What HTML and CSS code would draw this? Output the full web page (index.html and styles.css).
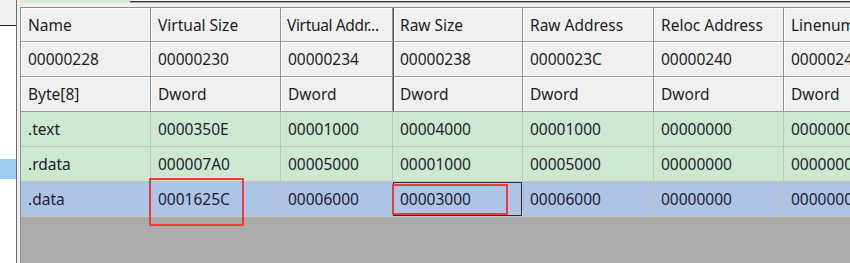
FILE: index.html
```html
<!DOCTYPE html>
<html>
<head>
<meta charset="utf-8">
<title>Section Headers</title>
<link rel="stylesheet" href="styles.css">
</head>
<body>
<div class="side">
  <div class="side-top"></div>
  <div class="side-body"><div class="side-sel"></div></div>
</div>
<div class="divider"></div>
<div class="frame">
  <div class="tabstrip"><div class="tab-on"></div><div class="tab-rest"></div></div>
  <div class="view">
    <div class="grid">
      <div class="cell hd">Name</div>
      <div class="cell hd">Virtual Size</div>
      <div class="cell hd tight">Virtual Addr...</div>
      <div class="cell hd sel-col">Raw Size</div>
      <div class="cell hd">Raw Address</div>
      <div class="cell hd">Reloc Address</div>
      <div class="cell hd">Linenumbers</div>

      <div class="cell hd">00000228</div>
      <div class="cell hd">00000230</div>
      <div class="cell hd">00000234</div>
      <div class="cell hd sel-col">00000238</div>
      <div class="cell hd">0000023C</div>
      <div class="cell hd">00000240</div>
      <div class="cell hd">00000244</div>

      <div class="cell hd">Byte[8]</div>
      <div class="cell hd">Dword</div>
      <div class="cell hd">Dword</div>
      <div class="cell hd sel-col">Dword</div>
      <div class="cell hd">Dword</div>
      <div class="cell hd">Dword</div>
      <div class="cell hd">Dword</div>

      <div class="cell row">.text</div>
      <div class="cell row">0000350E</div>
      <div class="cell row">00001000</div>
      <div class="cell row">00004000</div>
      <div class="cell row">00001000</div>
      <div class="cell row">00000000</div>
      <div class="cell row">00000000</div>

      <div class="cell row">.rdata</div>
      <div class="cell row">000007A0</div>
      <div class="cell row">00005000</div>
      <div class="cell row">00001000</div>
      <div class="cell row">00005000</div>
      <div class="cell row">00000000</div>
      <div class="cell row">00000000</div>

      <div class="cell row active">.data</div>
      <div class="cell row active">0001625C<span class="mark mark-vs"></span></div>
      <div class="cell row active">00006000</div>
      <div class="cell row active focus">00003000<span class="mark mark-rs"></span></div>
      <div class="cell row active">00006000</div>
      <div class="cell row active">00000000</div>
      <div class="cell row active">00000000</div>
    </div>
  </div>
</div>
</body>
</html>
```
FILE: styles.css
```css
html, body {
  margin: 0;
  padding: 0;
}
body {
  width: 850px;
  height: 263px;
  overflow: hidden;
  display: flex;
  background: #f0f0f0;
  font-family: "Noto Sans", "Open Sans", sans-serif;
  font-size: 15.5px;
  color: #1c1c1c;
}
.side {
  width: 16px;
  display: flex;
  flex-direction: column;
}
.side-top {
  height: 25px;
  background: #f0f0f0;
  border-bottom: 1px solid #1e1e1e;
}
.side-body {
  flex: 1;
  background: #ffffff;
}
.side-sel {
  margin-top: 133px;
  height: 20px;
  background: #9fcdf0;
}
.divider {
  width: 1px;
  background: #6b6b6b;
}
.frame {
  flex: 1;
  min-width: 0;
  padding-left: 3px;
  display: flex;
  flex-direction: column;
  overflow: hidden;
}
.tabstrip {
  height: 3px;
  display: flex;
  margin-bottom: 4px;
}
.tab-on {
  width: 110px;
  background: #d3ead3;
}
.tab-rest {
  flex: 1;
  margin-top: 1px;
  border-top: 1px solid #3a3a3a;
  background: #a8a8a8;
}
.view {
  flex: 1;
  background: #ababab;
  border-left: 1px solid #8e8e8e;
  border-top: 1px solid #8e8e8e;
  overflow: hidden;
}
.grid {
  display: grid;
  grid-template-columns: 130px 130px 112px 130px 131px 130px 130px;
  grid-template-rows: 34px repeat(5, 35px);
  width: max-content;
}
.cell {
  position: relative;
  box-sizing: border-box;
  display: flex;
  align-items: center;
  padding-left: 7px;
  white-space: nowrap;
  overflow: visible;
}
.hd {
  background: #f0f0f0;
  border-right: 1px solid #8f8f8f;
  border-bottom: 1px solid #9a9a9a;
  box-shadow: inset 1px 1px 0 #ffffff;
  overflow: hidden;
}
.tight {
  letter-spacing: -0.35px;
  padding-left: 6px;
}
.sel-col {
  border-left: 1px solid #5a5a5a;
  padding-left: 6px;
}
.row {
  background: #cde8d0;
  border-right: 1px solid #c3c3c3;
  border-bottom: 1px solid #c3c3c3;
  color: #1a2230;
}
.row.active {
  background: #aec4e6;
  border-color: #c0c4cc;
}
.focus {
  box-shadow: inset 0 0 0 1px #2c2c2c;
}
.mark {
  position: absolute;
  box-sizing: border-box;
  border: 2px solid #ea3a3a;
}
.mark-vs {
  left: -2px;
  top: -4px;
  width: 95px;
  height: 48px;
}
.mark-rs {
  left: -1px;
  top: 2px;
  width: 116px;
  height: 31px;
}
```
